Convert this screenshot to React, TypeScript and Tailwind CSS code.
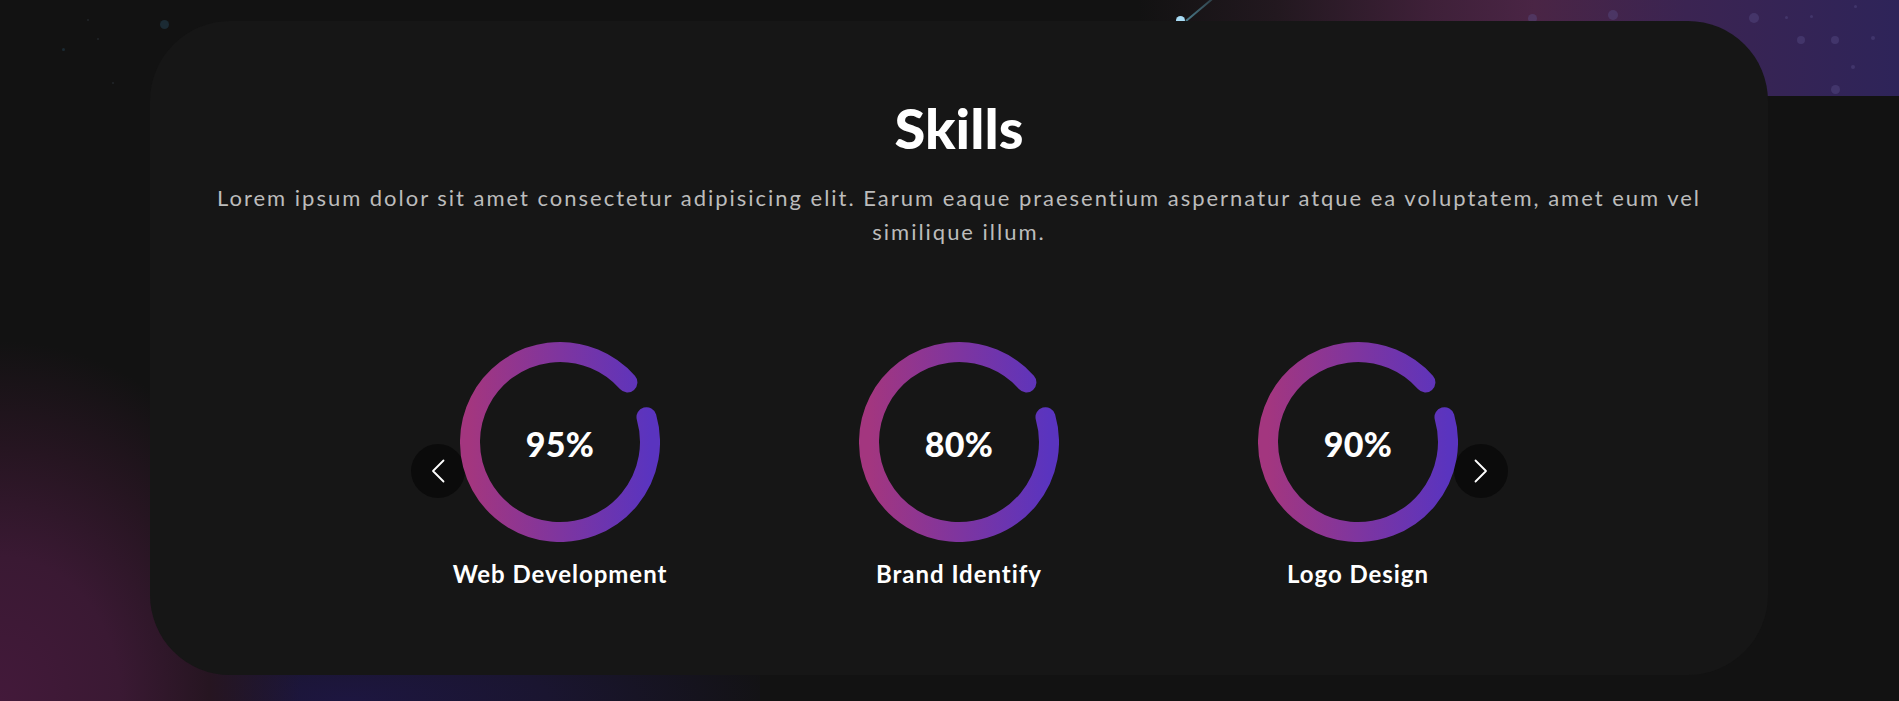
import React from "react";

const skills = [
  { pct: 95, label: "Web Development" },
  { pct: 80, label: "Brand Identify" },
  { pct: 90, label: "Logo Design" },
];

function Ring({ id, pct }: { id: string; pct: number }) {
  return (
    <div className="relative w-[200px] h-[200px]">
      <svg width="200" height="200" viewBox="0 0 200 200" className="absolute inset-0">
        <defs>
          <linearGradient id={id} x1="0" y1="0" x2="1" y2="0">
            <stop offset="0%" stopColor="#a3367f" />
            <stop offset="100%" stopColor="#5a34bf" />
          </linearGradient>
        </defs>
        <path
          d="M186.5 75.2 A90 90 0 1 1 167.4 40.4"
          fill="none"
          stroke={`url(#${id})`}
          strokeWidth="20"
          strokeLinecap="round"
        />
      </svg>
      <div className="absolute inset-0 flex items-center justify-center pt-[3px]">
        <span className="text-white font-black text-[34px] leading-none tracking-[0.01em] font-['Lato',sans-serif]">{pct}%</span>
      </div>
    </div>
  );
}

function Chevron({ dir }: { dir: "left" | "right" }) {
  return (
    <svg width="14" height="24" viewBox="0 0 14 24" fill="none">
      {dir === "left" ? (
        <polyline points="12.5,1.5 2,12 12.5,22.5" stroke="#ffffff" strokeWidth="1.8" strokeLinecap="round" strokeLinejoin="round" />
      ) : (
        <polyline points="1.5,1.5 12,12 1.5,22.5" stroke="#ffffff" strokeWidth="1.8" strokeLinecap="round" strokeLinejoin="round" />
      )}
    </svg>
  );
}

const dotsTop = [
  { c: "left-[160px] top-[20px] w-[9px] h-[9px] bg-[#1b2a33]" },
  { c: "left-[62px] top-[48px] w-[3px] h-[3px] bg-[#1b2a33]" },
  { c: "left-[97px] top-[38px] w-[2px] h-[2px] bg-[#22262a]" },
  { c: "left-[87px] top-[19px] w-[2px] h-[2px] bg-[#22262a]" },
  { c: "left-[112px] top-[82px] w-[2px] h-[2px] bg-[#22262a]" },
];

const bubbles = [
  "left-[1528px] top-[14px] w-[9px] h-[9px]",
  "left-[1608px] top-[10px] w-[10px] h-[10px]",
  "left-[1749px] top-[13px] w-[10px] h-[10px]",
  "left-[1797px] top-[36px] w-[8px] h-[8px]",
  "left-[1831px] top-[36px] w-[8px] h-[8px]",
  "left-[1831px] top-[85px] w-[9px] h-[9px]",
  "left-[1851px] top-[65px] w-[4px] h-[4px]",
  "left-[1871px] top-[36px] w-[4px] h-[4px]",
  "left-[1810px] top-[15px] w-[3px] h-[3px]",
  "left-[1854px] top-[5px] w-[3px] h-[3px]",
  "left-[1785px] top-[16px] w-[3px] h-[3px]",
];

export default function App() {
  return (
    <div className="relative w-full h-[701px] overflow-hidden bg-[#121212] font-['Lato',sans-serif]">
      {/* background: top-right nebula */}
      <div className="absolute top-0 right-0 w-[760px] h-[96px] bg-[linear-gradient(to_right,#121212_0%,#22181f_18%,#3e2038_38%,#4a2545_52%,#3b2452_72%,#2e2459_100%)]" />
      {bubbles.map((b, i) => (
        <div key={i} className={`absolute rounded-full bg-[#5a4f8a]/40 ${b}`} />
      ))}
      {/* comet */}
      <div className="absolute left-[1186px] top-[0px] w-[60px] h-[2px] bg-[linear-gradient(to_right,#4a7a8a,transparent)] origin-left -rotate-[40deg] translate-y-[20px]" />
      <div className="absolute left-[1176px] top-[16px] w-[9px] h-[9px] rounded-full bg-[#a9dcf5]" />
      {/* dots top-left */}
      {dotsTop.map((d, i) => (
        <div key={i} className={`absolute rounded-full ${d.c}`} />
      ))}
      {/* bottom-left glow */}
      <div className="absolute left-0 bottom-0 w-[760px] h-[380px] bg-[radial-gradient(ellipse_440px_120px_at_350px_100%,#1d1640_0%,#1a1530_45%,transparent_100%)]" />
      <div className="absolute left-0 bottom-0 w-[500px] h-[400px] bg-[radial-gradient(ellipse_300px_360px_at_0%_100%,#43193a_0%,#3a1933_40%,#261521_70%,transparent_100%)]" />

      {/* card */}
      <div className="relative ml-[150px] mt-[21px] w-[1618px] h-[654px] rounded-[80px] bg-[#161616] flex flex-col items-center">
        <h2 className="pt-[79px] text-white font-black text-[56px] leading-none">Skills</h2>
        <p className="mt-[25px] w-[1500px] text-center text-[#bcbcbc] text-[22px] leading-[34px] tracking-[1.98px]">
          Lorem ipsum dolor sit amet consectetur adipisicing elit. Earum eaque praesentium aspernatur atque ea voluptatem, amet eum vel similique illum.
        </p>

        <div className="relative mt-[93px] w-[1197px]">
          <button className="absolute left-[50px] top-[102px] w-[54px] h-[54px] rounded-full bg-[#0b0b0b] flex items-center justify-center">
            <Chevron dir="left" />
          </button>
          <button className="absolute right-[50px] top-[102px] w-[54px] h-[54px] rounded-full bg-[#0b0b0b] flex items-center justify-center">
            <Chevron dir="right" />
          </button>
          <div className="relative grid grid-cols-3">
            {skills.map((s, i) => (
              <div key={s.label} className="flex flex-col items-center">
                <Ring id={`g${i}`} pct={s.pct} />
                <div className="mt-[17px] text-white font-bold text-[24px] leading-[30px] tracking-[0.04em]">{s.label}</div>
              </div>
            ))}
          </div>
        </div>
      </div>
    </div>
  );
}
